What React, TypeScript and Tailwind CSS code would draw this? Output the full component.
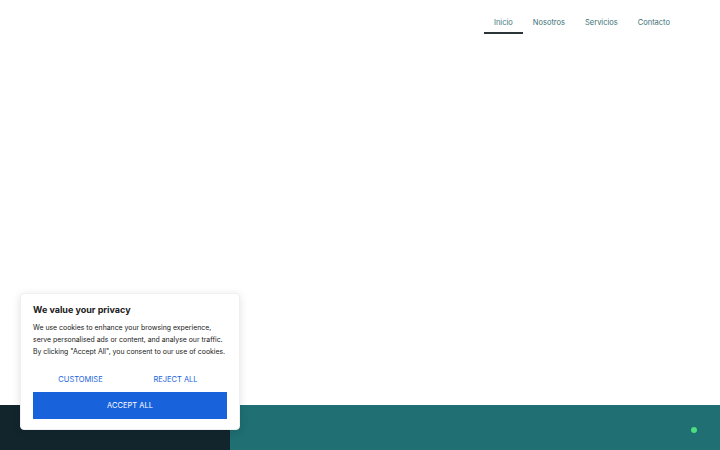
import { useState } from "react";

const navItems = ["Inicio", "Nosotros", "Servicios", "Contacto"];

export default function App() {
  const [active, setActive] = useState("Inicio");
  const [showBanner, setShowBanner] = useState(true);

  return (
    <div className="min-h-screen bg-white font-['Inter','Liberation_Sans',sans-serif] relative overflow-hidden">
      <header className="h-[405px] flex flex-col">
        <nav className="flex justify-end pr-[40px] pt-[14px]">
          {navItems.map((item) => (
            <button
              key={item}
              onClick={() => setActive(item)}
              className={`px-[10px] h-[20px] text-[7.5px] leading-[12px] border-b-2 ${
                active === item ? "text-[#3b767b] border-[#2b3538]" : "text-[#3a6f74] border-transparent"
              }`}
            >
              {item}
            </button>
          ))}
        </nav>
      </header>

      <footer className="flex h-[60px]">
        <div className="w-[230px] bg-[#12252d]" />
        <div className="flex-1 bg-[#1f6f73] flex justify-end pt-[22px] pr-[23px]">
          <span className="w-[6px] h-[6px] rounded-full bg-[#4ade80]" />
        </div>
      </footer>

      {showBanner && (
        <div className="absolute left-[20px] top-[293px] w-[220px] bg-white rounded-[4px] border border-[#f0f0f0] shadow-[0_2px_8px_rgba(0,0,0,0.12)] px-[12px] pt-[9px] pb-[10px]">
          <h2 className="text-[9px] font-bold text-[#212121] leading-[14px]">We value your privacy</h2>
          <p className="mt-[5px] text-[6.9px] leading-[12px] text-[#212121]">
            We use cookies to enhance your browsing experience,
            <br />
            serve personalised ads or content, and analyse our traffic.
            <br />
            By clicking "Accept All", you consent to our use of cookies.
          </p>
          <div className="mt-[15px] grid grid-cols-2 text-[7.5px] text-[#1863dc] h-[14px] items-center pr-[4px]">
            <button className="text-center">CUSTOMISE</button>
            <button className="text-center" onClick={() => setShowBanner(false)}>REJECT ALL</button>
          </div>
          <button
            onClick={() => setShowBanner(false)}
            className="mt-[5px] w-full h-[27px] bg-[#1863dc] text-white text-[7.5px]"
          >
            ACCEPT ALL
          </button>
        </div>
      )}
    </div>
  );
}
